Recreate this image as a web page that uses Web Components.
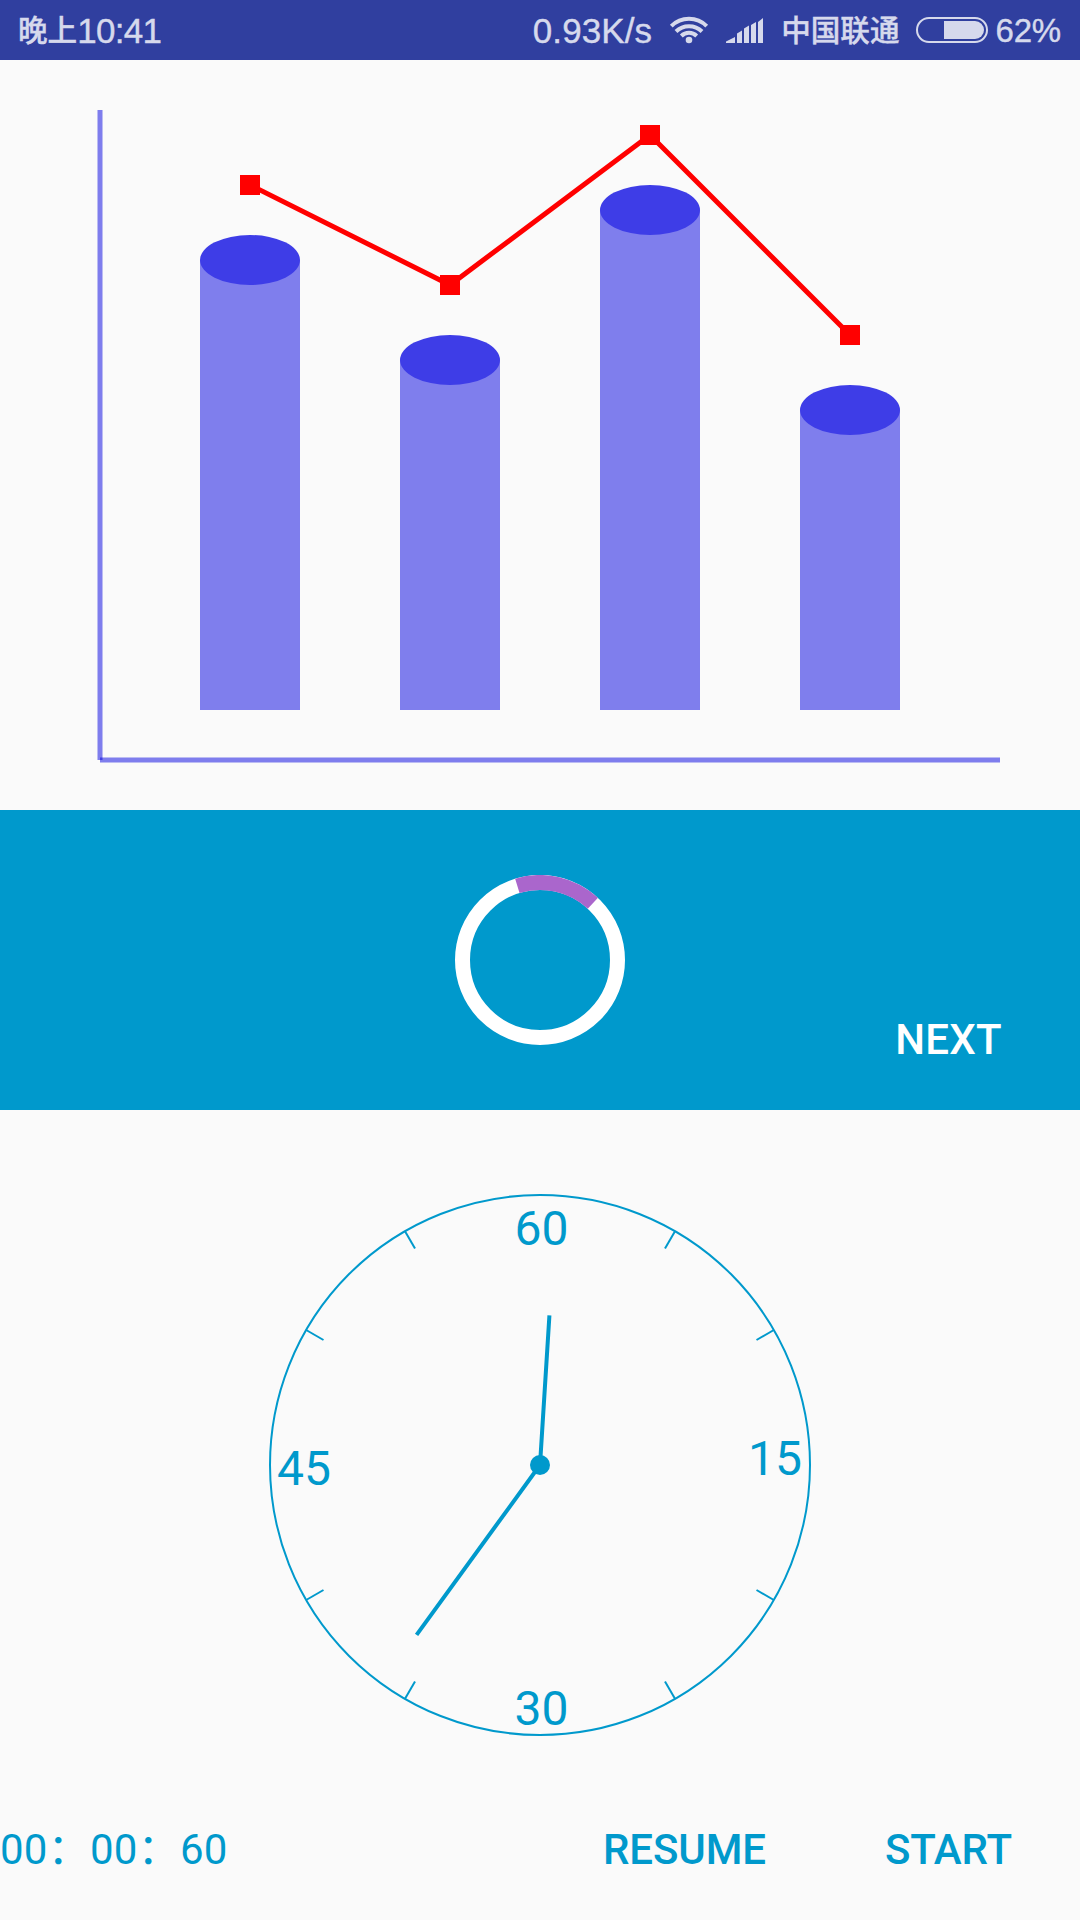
<!DOCTYPE html>
<html lang="zh-CN">
<head>
<meta charset="utf-8">
<title>Custom views</title>
<style>
html, body { margin: 0; padding: 0; background: #fafafa; }
</style>
</head>
<body>
<demo-screen></demo-screen>
<script>
function define(name, html, setup) {
  const template = document.createElement('template');
  template.innerHTML = html;
  customElements.define(name, class extends HTMLElement {
    constructor() {
      super();
      this.attachShadow({ mode: 'open' }).appendChild(template.content.cloneNode(true));
    }
    connectedCallback() { if (setup) setup(this, this.shadowRoot); }
  });
}

define('status-bar', `
<style>
:host { display: flex; height: 60px; box-sizing: border-box; padding: 0 19px 0 18px; background: #303f9f; color: #d6d9ec;
  font-family: "Liberation Sans", "Noto Sans CJK SC", sans-serif; font-size: 35px; line-height: 61px; white-space: nowrap;
  -webkit-text-stroke: .4px #d6d9ec; }
span { display: block; height: 60px; }
.cjk { font-family: "Noto Sans CJK SC", sans-serif; font-size: 29.6px; line-height: 57px; font-weight: 500; }
.clock { flex: 1; display: flex; }
.digits { letter-spacing: -.7px; }
svg { display: block; flex: none; }
</style>
<div class="clock"><span class="cjk">晚上</span><span class="digits">10:41</span></div>
<span class="rate" style="letter-spacing:.1px">0.93K/s</span>
<svg style="margin-left:17px" width="40" height="60" viewBox="669 0 40 60" fill="none" stroke="#d6d9ec" stroke-width="4">
  <path d="M671.300 26.200a25 25 0 0 1 35.400 0M676 31.500a18.500 18.500 0 0 1 26 0M681.300 36a11 11 0 0 1 15.400 0"/>
  <circle cx="689" cy="40" r="3.300" fill="#d6d9ec" stroke="none"/>
</svg>
<svg style="margin-left:16px" width="40" height="60" viewBox="725 0 40 60" fill="#d6d9ec">
  <path d="M726 43v-1.500l9-4.500v6zM737 43v-9.500l5-3v12.500zM744 43v-14.500l5-3v17.500zM751 43v-18l5-3v21zM758 43v-21l5-4v25z"/>
</svg>
<span class="cjk" style="margin-left:16px">中国联通</span>
<svg style="margin-left:15px" width="74" height="60" viewBox="915 0 74 60">
  <rect x="917" y="18" width="70" height="24" rx="12" fill="none" stroke="#d6d9ec" stroke-width="2"/>
  <path d="M944 21h31a9 9 0 0 1 0 18h-31z" fill="#d6d9ec"/>
</svg>
<span class="pct" style="margin-left:7px;font-size:33px;letter-spacing:-.2px">62%</span>
`);

define('bar-line-chart', `
<style>:host { display: block; height: 750px; } svg { display: block; }</style>
<svg width="1080" height="750" viewBox="0 60 1080 750">
  <g stroke="rgb(2,0,224)" stroke-opacity=".5" stroke-width="5">
    <path d="M100 110V760"/><path d="M100 760H1000"/>
  </g>
  <g class="bars"></g>
  <polyline fill="none" stroke="#f00" stroke-width="5"/>
  <g class="points" fill="#f00"></g>
</svg>`, (host, root) => {
  const tops = host.getAttribute('bars').split(',').map(Number);
  const x = i => 250 + i * 200;
  root.querySelector('.bars').innerHTML = tops.map((y, i) =>
    `<rect x="${x(i) - 50}" y="${y}" width="100" height="${710 - y}" fill="#7f7eed"/>
     <ellipse cx="${x(i)}" cy="${y}" rx="50" ry="25" fill="#3e3de7"/>`).join('');
  root.querySelector('polyline').setAttribute('points', tops.map((y, i) => `${x(i)},${y - 75}`).join(' '));
  root.querySelector('.points').innerHTML = tops.map((y, i) =>
    `<rect x="${x(i) - 10}" y="${y - 85}" width="20" height="20"/>`).join('');
});

define('flat-button', `
<style>:host { display: block; font: 500 42px/50px Roboto, sans-serif; white-space: nowrap; }</style><slot></slot>`);

define('ring-panel', `
<style>
:host { display: grid; grid-template-columns: 1fr 170px 1fr; height: 300px; background: #0099cc; color: #fff; }
svg { display: block; grid-column: 2; margin-top: 65px; }
.action { justify-self: end; align-self: end; padding: 0 78px 45px 0; letter-spacing: .3px; }
</style>
<svg width="170" height="170" viewBox="-85 -85 170 170" fill="none" stroke-width="15">
  <circle r="77.500" stroke="#fff"/>
  <path stroke="#aa66cc" d="M-22.659 -74.114A77.500 77.500 0 0 1 52.855 -56.680"/>
</svg>
<div class="action"><slot></slot></div>`);

define('stop-watch', `
<style>:host { display: block; width: 560px; height: 560px; } svg { display: block; }</style>
<svg width="560" height="560" viewBox="-280 -280 560 560" fill="none" stroke="#0099cc">
  <circle r="270" stroke-width="2"/>
  <g class="ticks" stroke-width="2"></g>
  <path d="M0 0L9.420 -149.700M0 0L-123.430 169.900" stroke-width="4"/>
  <circle r="10" fill="#0099cc" stroke="none"/>
  <g fill="#0099cc" stroke="none" font-family="Roboto, sans-serif" font-size="48" text-anchor="middle">
    <text x="1.500" y="-220">60</text><text x="235" y="10">15</text>
    <text x="1.500" y="260">30</text><text x="-236" y="20">45</text>
  </g>
</svg>`, (host, root) => {
  root.querySelector('.ticks').innerHTML = [30, 60, 120, 150, 210, 240, 300, 330].map(a =>
    `<path d="M0 -270V-250" transform="rotate(${a})"/>`).join('');
});

define('timer-controls', `
<style>
:host { display: flex; align-items: center; height: 50px; color: #0099cc; padding-right: 68px; }
.time { flex: 1; font: 400 42px/50px Roboto, "Noto Sans CJK SC", sans-serif; letter-spacing: .25px; white-space: nowrap; }
.actions { display: flex; gap: 119px; letter-spacing: -.1px; }
</style>
<div class="time">00：00：60</div>
<div class="actions"><slot></slot></div>`);

define('demo-screen', `
<style>
:host { display: flex; flex-direction: column; width: 1080px; height: 1920px; overflow: hidden; background: #fafafa; }
stop-watch { align-self: center; margin-top: 75px; }
timer-controls { margin-top: 80px; }
</style>
<status-bar></status-bar>
<bar-line-chart bars="260,360,210,410"></bar-line-chart>
<ring-panel><flat-button>NEXT</flat-button></ring-panel>
<stop-watch></stop-watch>
<timer-controls><flat-button>RESUME</flat-button><flat-button>START</flat-button></timer-controls>
`);
</script>
</body>
</html>
